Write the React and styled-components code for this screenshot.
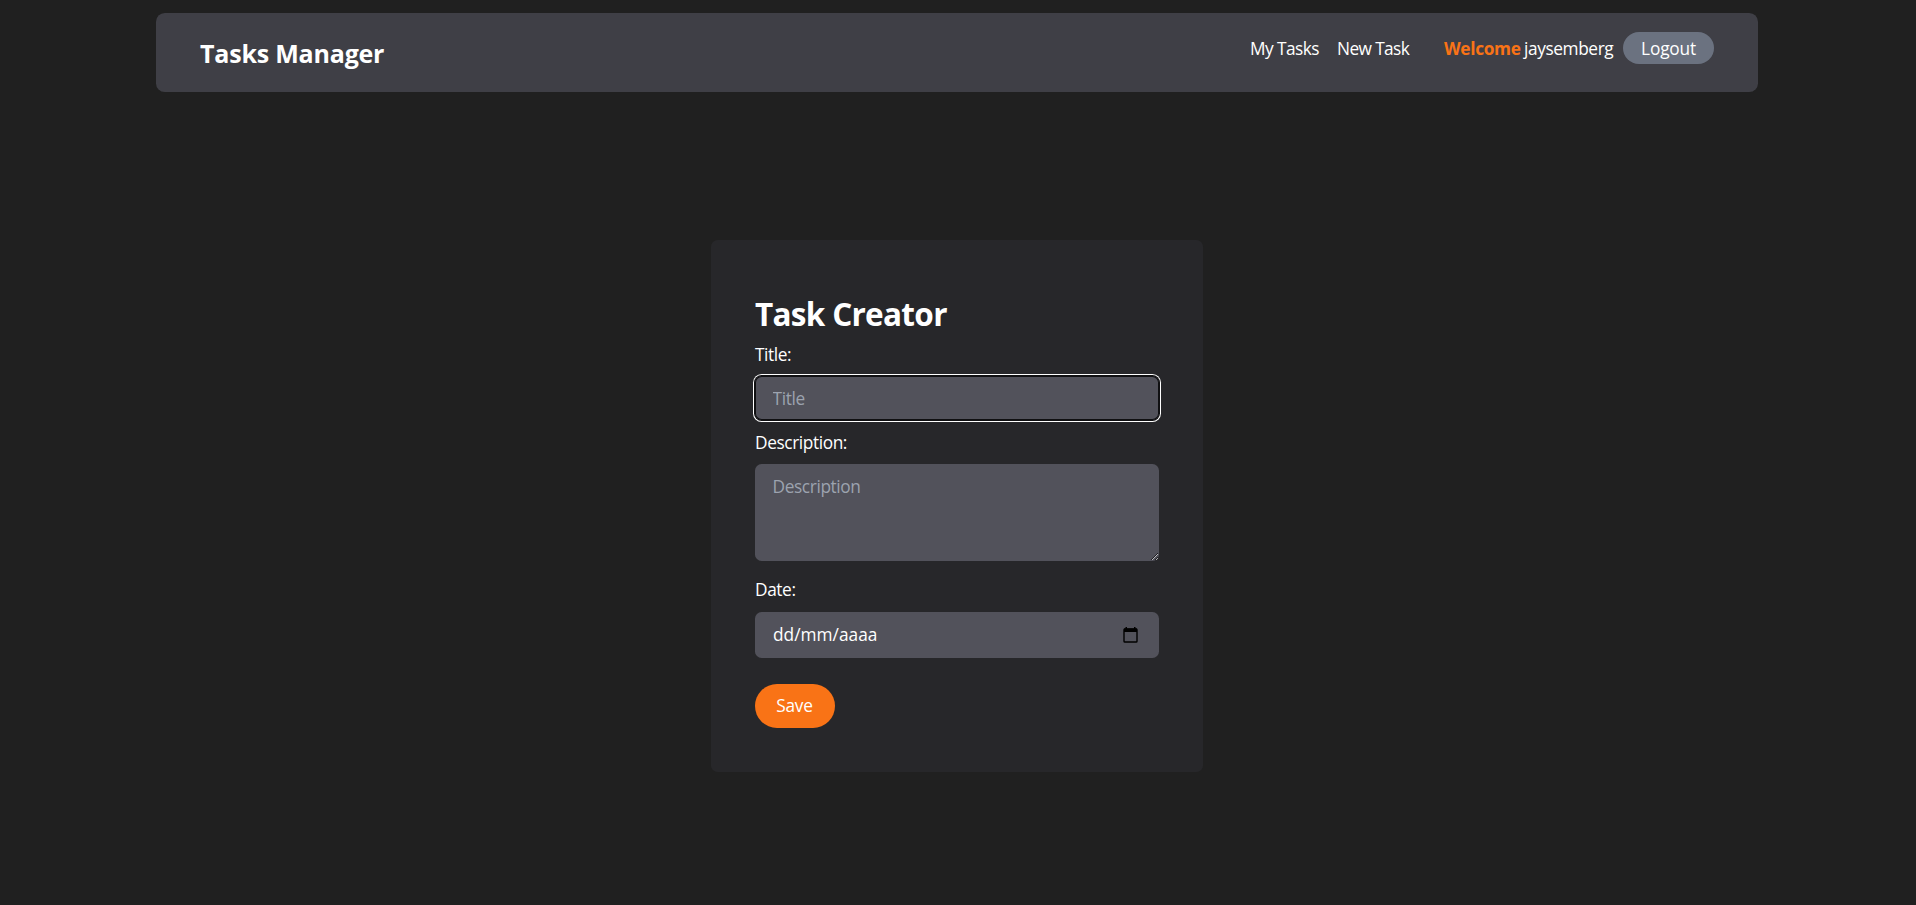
import React from "react";
import styled, { createGlobalStyle, css } from "styled-components";

const GlobalStyle = createGlobalStyle`
  *, *::before, *::after { box-sizing: border-box; margin: 0; padding: 0; }
  body {
    background: #202020;
    color: #fff;
    font-family: "Open Sans", "Noto Sans", sans-serif;
    font-size: 17.3px;
    line-height: 26.4px;
    letter-spacing: -0.4px;
    overflow: hidden;
  }
`;

const Page = styled.main`
  width: 1602px;
  height: 905px;
  margin: 0 0 0 156px;
  padding-top: 13px;
`;

const Navbar = styled.nav`
  display: flex;
  justify-content: space-between;
  align-items: flex-start;
  height: 79px;
  padding: 19px 44px 0;
  border-radius: 8.8px;
  background: #3f3f46;
`;

const Brand = styled.h1`
  padding-top: 4px;
  font-size: 25px;
  line-height: 35px;
  font-weight: 700;
  letter-spacing: -0.2px;
`;

const NavList = styled.ul`
  display: flex;
  height: 32px;
  line-height: 34px;
  list-style: none;
`;

const NavItem = styled.li`
  width: ${(p) => p.$width}px;
  white-space: nowrap;
  letter-spacing: ${(p) => p.$spacing ?? -0.4}px;
`;

const Accent = styled.strong`
  display: inline-block;
  width: 80px;
  color: #f97316;
  font-weight: 700;
  letter-spacing: -0.35px;
`;

const LogoutButton = styled.a`
  display: block;
  width: 91px;
  height: 32px;
  border-radius: 16px;
  background: #6b7280;
  text-align: center;
  letter-spacing: -0.2px;
`;

const Content = styled.section`
  display: flex;
  justify-content: center;
  padding-top: 148px;
`;

const Card = styled.form`
  display: flex;
  flex-direction: column;
  width: 492px;
  height: 532px;
  padding: 54px 44px 44px;
  border-radius: 6.6px;
  background: #27272a;
`;

const Heading = styled.h2`
  font-size: 31.5px;
  line-height: 40px;
  font-weight: 700;
  letter-spacing: -0.7px;
`;

const Label = styled.label`
  height: 26px;
  margin-top: ${(p) => p.$top}px;
  line-height: ${(p) => p.$line ?? 28}px;
`;

const field = css`
  display: block;
  width: 404px;
  padding: 8.8px 17.6px;
  border: 0;
  border-radius: 6.6px;
  background: #52525b;
  color: #fff;
  font: inherit;
  letter-spacing: inherit;
  &::placeholder { color: #9ca3af; opacity: 1; }
`;

const TitleInput = styled.input`
  ${field}
  height: 44px;
  margin-top: 9px;
  outline: 0;
  box-shadow: inset 0 0 0 1px #101012, 0 0 0 1px #101012, 0 0 0 2px #fff;
`;

const DescriptionInput = styled.textarea`
  ${field}
  height: 97px;
  margin-top: 9px;
  padding-top: 9.8px;
  resize: vertical;
`;

const DateField = styled.div`
  ${field}
  display: flex;
  align-items: center;
  justify-content: space-between;
  height: 46px;
  margin-top: 9px;
  padding: 0 21px 0 18px;
  letter-spacing: 0.02px;
`;

const SaveButton = styled.button`
  width: 80px;
  height: 44px;
  margin-top: 26px;
  padding: 0 1px 0 0;
  border: 0;
  border-radius: 22px;
  background: #f97316;
  color: #fff;
  font: inherit;
  line-height: 44px;
  letter-spacing: -0.2px;
`;

const CalendarIcon = () => (
  <svg width="15" height="16" viewBox="0 0 15 16" fill="none">
    <path d="M1 1.5h13v3.5H1zM2.5 0H4v2H2.5zM11 0h1.5v2H11z" fill="#000" />
    <rect x="1" y="2" width="13" height="13" rx="0.8" stroke="#000" strokeWidth="1.4" />
  </svg>
);

export default function App() {
  return (
    <>
      <GlobalStyle />
      <Page>
        <Navbar>
          <Brand>Tasks Manager</Brand>
          <NavList>
            <NavItem $width={87} $spacing={-0.55}>My Tasks</NavItem>
            <NavItem $width={107} $spacing={-0.6}>New Task</NavItem>
            <NavItem $width={179}><Accent>Welcome</Accent>jaysemberg</NavItem>
            <NavItem $width={91}><LogoutButton>Logout</LogoutButton></NavItem>
          </NavList>
        </Navbar>
        <Content>
          <Card>
            <Heading>Task Creator</Heading>
            <Label $top={7}>Title:</Label>
            <TitleInput placeholder="Title" />
            <Label $top={9}>Description:</Label>
            <DescriptionInput placeholder="Description" />
            <Label $top={16} $line={26.4}>Date:</Label>
            <DateField><span>dd/mm/aaaa</span><CalendarIcon /></DateField>
            <SaveButton type="button">Save</SaveButton>
          </Card>
        </Content>
      </Page>
    </>
  );
}
